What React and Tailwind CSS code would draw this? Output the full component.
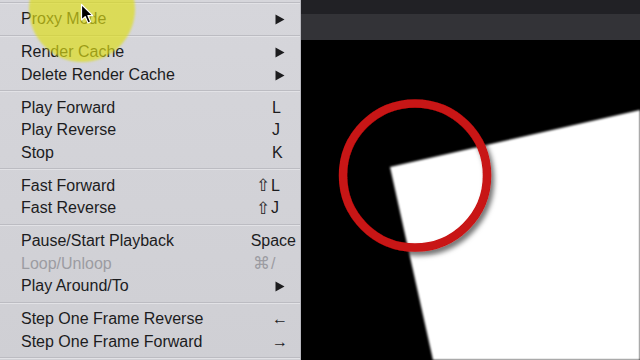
const groups = [
  [{ label: "Proxy Mode", sub: true }],
  [
    { label: "Render Cache", sub: true },
    { label: "Delete Render Cache", sub: true },
  ],
  [
    { label: "Play Forward", key: "L" },
    { label: "Play Reverse", key: "J" },
    { label: "Stop", key: "K" },
  ],
  [
    { label: "Fast Forward", mod: "⇧", key: "L" },
    { label: "Fast Reverse", mod: "⇧", key: "J" },
  ],
  [
    { label: "Pause/Start Playback", wide: "Space" },
    { label: "Loop/Unloop", mod: "⌘", key: "/", disabled: true },
    { label: "Play Around/To", sub: true },
  ],
  [
    { label: "Step One Frame Reverse", key: "←" },
    { label: "Step One Frame Forward", key: "→" },
  ],
]

const Separator = () => (
  <div className="h-[10.5px] flex items-center">
    <div className="w-full h-px bg-[#bcbcc2] shadow-[0_1px_0_#e2e2e6]" />
  </div>
)

const Shortcut = ({ item }) => {
  if (item.sub) {
    return (
      <svg className="absolute left-[275px] top-[7px]" width="10" height="11" viewBox="0 0 10 11">
        <path d="M0.5 0.5 L9.5 5.5 L0.5 10.5 Z" fill="#1c1c1e" />
      </svg>
    )
  }
  if (item.wide) {
    return <span className="absolute right-[4px]">{item.wide}</span>
  }
  return (
    <>
      {item.mod && <span className="absolute right-[30px] text-[17px]">{item.mod}</span>}
      <span className={`absolute ${item.mod ? "left-[271px]" : "left-[272px]"}`}>{item.key}</span>
    </>
  )
}

const MenuRow = ({ item }) => (
  <div
    className={`relative h-[22.5px] flex items-center pl-[21px] pt-[1px] ${item.disabled ? "text-[#9c9ca2]" : "text-[#1c1c1e]"}`}
  >
    <span>{item.label}</span>
    <Shortcut item={item} />
  </div>
)

export default function App() {
  return (
    <div className="w-[640px] h-[360px] overflow-hidden flex bg-black font-['Liberation_Sans',Arial,sans-serif] text-[16px] leading-none">
      <div className="relative w-[301px] h-full bg-gradient-to-b from-[#d6d6db] to-[#cfcfd4] border-r border-[#b8b8be]">
        <div className="-mt-[3.25px]">
          {groups.map((group, i) => (
            <div key={i}>
              <Separator />
              {group.map((item) => (
                <MenuRow key={item.label} item={item} />
              ))}
            </div>
          ))}
          <Separator />
        </div>

        {/* highlight round the pointer */}
        <div className="absolute left-[29px] -top-[44px] w-[106px] h-[106px] rounded-full bg-[rgba(222,222,20,0.66)] blur-[1px] pointer-events-none" />

        <svg className="absolute left-[80px] top-[3px]" width="14" height="22" viewBox="0 0 14 22">
          <path d="M1.5 1.5 L1.5 17 L5.2 13.6 L8 20 L10.6 18.8 L7.9 12.6 L12.8 12.6 Z" fill="#000" stroke="#fff" strokeWidth="1.2" strokeLinejoin="round" />
        </svg>
      </div>

      <div className="flex-1 flex flex-col">
        <div className="h-[14px] bg-[#212125]" />
        <div className="h-[26px] bg-[#333337]" />
        <div className="flex-1 bg-black">
          <svg width="339" height="320" viewBox="301 40 339 320" className="block">
            <defs>
              <filter id="soft" x="-10%" y="-10%" width="120%" height="120%">
                <feGaussianBlur stdDeviation="0.8" />
              </filter>
              <filter id="shadow" x="-20%" y="-20%" width="140%" height="140%">
                <feDropShadow dx="3" dy="4" stdDeviation="2.5" floodColor="#000" floodOpacity="0.55" />
              </filter>
            </defs>
            <polygon points="390,167 640,110 640,360 433,360" fill="#fff" filter="url(#soft)" />
            <circle cx="415" cy="175.5" r="72" fill="none" stroke="#c81212" strokeWidth="8.5" filter="url(#shadow)" />
          </svg>
        </div>
      </div>
    </div>
  )
}
